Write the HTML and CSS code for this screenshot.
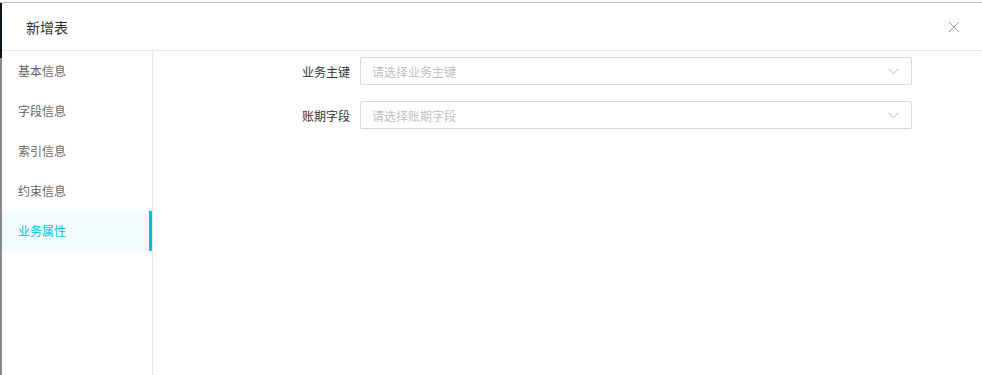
FILE: index.html
```html
<!DOCTYPE html>
<html lang="zh-CN">
<head>
<meta charset="UTF-8" />
<title>新增表</title>
<link rel="stylesheet" href="styles.css">
</head>
<body>

<div class="page">
  <div class="mask"></div>

  <div class="modal">
    <div class="modal-header">
      <span class="modal-title">新增表</span>
      <span class="modal-close">
        <svg width="12" height="12" viewBox="0 0 12 12"><path d="M1 1L11 11M11 1L1 11" stroke="#999" stroke-width="1" fill="none"/></svg>
      </span>
    </div>

    <div class="modal-body">
      <ul class="side-menu">
        <li>基本信息</li>
        <li>字段信息</li>
        <li>索引信息</li>
        <li>约束信息</li>
        <li class="active">业务属性</li>
      </ul>

      <div class="form">
        <div class="form-item">
          <label>业务主键</label>
          <div class="select">
            <span class="placeholder">请选择业务主键</span>
            <svg class="arrow" width="11" height="7" viewBox="0 0 11 7"><path d="M0.5 0.8L5.5 5.8L10.5 0.8" stroke="#bfbfbf" stroke-width="1" fill="none"/></svg>
          </div>
        </div>
        <div class="form-item">
          <label>账期字段</label>
          <div class="select">
            <span class="placeholder">请选择账期字段</span>
            <svg class="arrow" width="11" height="7" viewBox="0 0 11 7"><path d="M0.5 0.8L5.5 5.8L10.5 0.8" stroke="#bfbfbf" stroke-width="1" fill="none"/></svg>
          </div>
        </div>
      </div>
    </div>
  </div>
</div>

</body>
</html>
```

FILE: styles.css
```css
html, body {
  margin: 0;
  padding: 0;
  height: 100%;
  background: #fff;
  font-family: "Noto Sans CJK SC", "Noto Sans", sans-serif;
}
.page {
  display: flex;
  height: 372px;
  margin-top: 2px;
  border-top: 1px solid #bdbdbd;
}
.mask {
  width: 2px;
  flex-shrink: 0;
  background: linear-gradient(to bottom, #0b1622 0, #0b1622 55px, #8a8a8a 55px, #8a8a8a 100%);
}
.modal {
  flex: 1;
  display: flex;
  flex-direction: column;
  background: #fff;
}
.modal-header {
  height: 47px;
  border-bottom: 1px solid #e8e8e8;
  display: flex;
  align-items: center;
  justify-content: space-between;
  padding: 0 22px 0 24px;
}
.modal-title {
  font-size: 14px;
  color: #333;
}
.modal-close {
  display: flex;
  width: 12px;
  height: 12px;
}
.modal-body {
  flex: 1;
  display: flex;
}
.side-menu {
  list-style: none;
  margin: 0;
  padding: 0;
  width: 150px;
  border-right: 1px solid #e8e8e8;
  flex-shrink: 0;
}
.side-menu li {
  height: 40px;
  line-height: 40px;
  padding-left: 16px;
  font-size: 12px;
  color: #666;
}
.side-menu li.active {
  background: #f2fcfe;
  color: #00c1de;
  box-shadow: inset -3px 0 0 #00c1de;
}
.form {
  flex: 1;
  padding-top: 6px;
}
.form-item {
  display: flex;
  align-items: center;
  margin-bottom: 16px;
}
.form-item label {
  width: 207px;
  flex-shrink: 0;
  padding-right: 10px;
  box-sizing: border-box;
  text-align: right;
  font-size: 12px;
  color: #333;
}
.select {
  width: 552px;
  height: 28px;
  box-sizing: border-box;
  border: 1px solid #d9d9d9;
  border-radius: 2px;
  display: flex;
  align-items: center;
  justify-content: space-between;
  padding: 0 12px 0 11px;
}
.placeholder {
  font-size: 12px;
  color: #bfbfbf;
}
.arrow {
  display: block;
}
```
